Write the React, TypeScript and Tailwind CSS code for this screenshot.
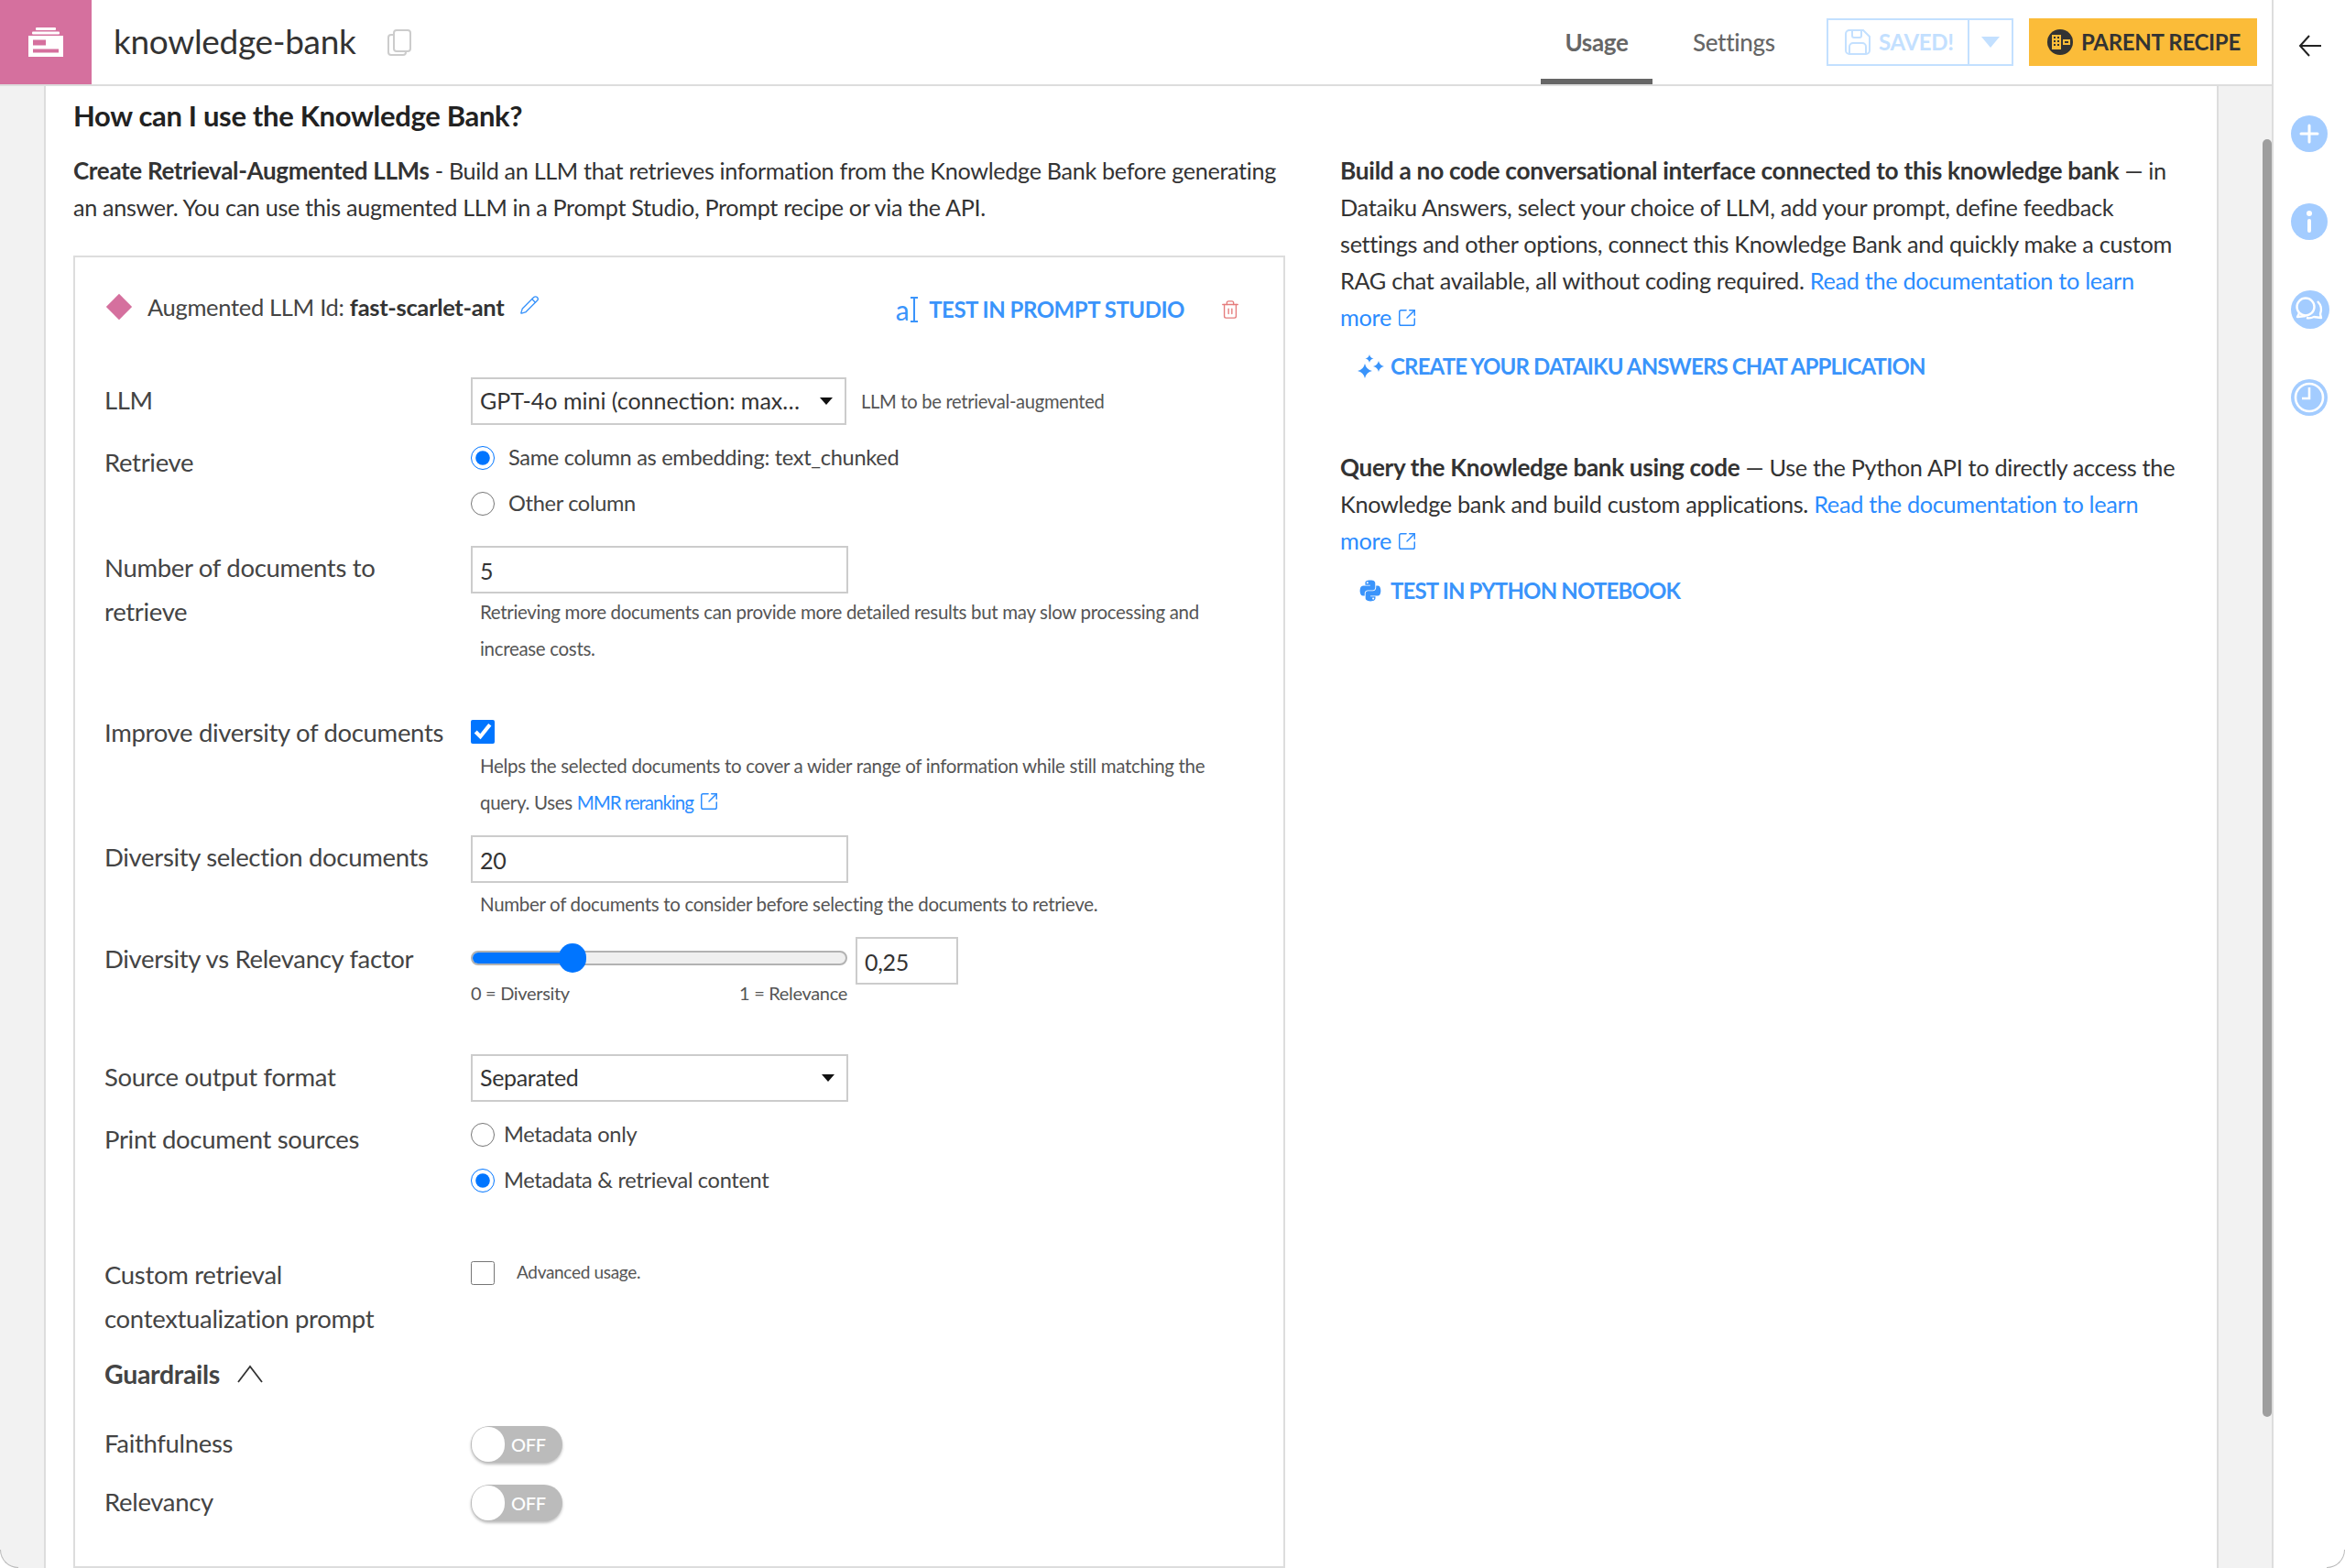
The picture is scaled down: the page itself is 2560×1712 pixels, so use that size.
import React from 'react';
import { Pencil, SquareArrowOutUpRight, Trash2 } from 'lucide-react';
import { FaPython } from 'react-icons/fa';

const ExtLink = ({ size = 20 }: { size?: number }) => (
  <SquareArrowOutUpRight size={size} strokeWidth={1.6} className="inline-block align-[-2px] ml-[6px]" />
);

// four point star used by the sparkle icon
const star = (cx: number, cy: number, r: number) =>
  `M${cx} ${cy - r}Q${cx + r * 0.18} ${cy - r * 0.18} ${cx + r} ${cy}Q${cx + r * 0.18} ${cy + r * 0.18} ${cx} ${cy + r}Q${cx - r * 0.18} ${cy + r * 0.18} ${cx - r} ${cy}Q${cx - r * 0.18} ${cy - r * 0.18} ${cx} ${cy - r}Z`;

// form row: fixed label column, the control sits right of it
const Row = ({ label, className, labelClass, children }: { label: React.ReactNode; className?: string; labelClass?: string; children?: React.ReactNode }) => (
  <div className={`flex ${className ?? ''}`}>
    <div className={`w-[400px] shrink-0 text-[27.5px] leading-[48px] text-[#444] ${labelClass ?? ''}`}>{label}</div>
    <div className="flex-1 min-w-0">{children}</div>
  </div>
);

const Help = ({ children }: { children: React.ReactNode }) => (
  <div className="pl-[10px] text-[20.5px] leading-[40px] text-[#555] whitespace-nowrap">{children}</div>
);

const TextBox = ({ value, className }: { value: string; className?: string }) => (
  <div className={`h-[52px] border-2 border-[#ccc] bg-white pl-[8px] text-[25px] leading-[50px] text-[#333] ${className ?? 'w-[412px]'}`}>{value}</div>
);

const Select = ({ value, className }: { value: string; className?: string }) => (
  <div className={`h-[52px] border-2 border-[#ccc] bg-white pl-[8px] pr-[13px] flex items-center justify-between text-[25px] text-[#333] ${className ?? 'w-[412px]'}`}>
    <span className="whitespace-nowrap">{value}</span>
    <span className="w-0 h-0 border-x-[7px] border-x-transparent border-t-[8px] border-t-[#111]" />
  </div>
);

const Radio = ({ label, checked, gap }: { label: string; checked?: boolean; gap: string }) => (
  <label className={`flex items-center h-[50px] ${gap} text-[23.6px] text-[#444] whitespace-nowrap`}>
    <input type="radio" readOnly checked={!!checked} className="w-[26px] h-[26px] m-0 accent-[#0075ff]" />
    {label}
  </label>
);

const Toggle = () => (
  <div className="relative w-[100px] h-[40px] rounded-full bg-[#bbb] shadow-[0_2px_3px_rgba(0,0,0,0.25)]">
    <div className="absolute left-[1px] top-[1px] w-[36px] h-[38px] rounded-full bg-white" />
    <span className="absolute left-[44px] top-0 leading-[40px] text-[20px] font-medium text-white">OFF</span>
  </div>
);

const ActionLink = ({ icon, children, className }: { icon: React.ReactNode; children: React.ReactNode; className?: string }) => (
  <div className={`flex items-center h-[40px] pl-[18px] text-[24px] font-bold tracking-[-0.035em] text-[#3a94fb] whitespace-nowrap ${className ?? ''}`}>
    <span className="w-[30px] flex justify-center shrink-0">{icon}</span>
    <span className="ml-[7px]">{children}</span>
  </div>
);

const RailIcon = ({ children, big }: { children: React.ReactNode; big?: boolean }) => (
  <div className={`rounded-full bg-[#a3ccff] flex items-center justify-center ${big ? 'w-[42px] h-[42px] my-[-1px]' : 'w-[40px] h-[40px]'}`}>{children}</div>
);

const App: React.FC = () => {
  return (
    <div
      className="relative w-[2560px] h-[1712px] overflow-hidden bg-white flex flex-col tracking-[-0.02em]"
      style={{ fontFamily: '"Lato", "Open Sans", sans-serif' }}
    >
      {/* top bar */}
      <header className="h-[94px] shrink-0 flex border-r-2 border-r-[#ddd] w-[2482px]">
        <div className="flex-1 flex border-b-2 border-[#ddd] min-w-0">
          <div className="w-[100px] h-[92px] bg-[#d5709e] flex items-center justify-center shrink-0">
            <svg width="38" height="32" viewBox="0 0 38 32" fill="#fff">
              <rect x="8" y="0" width="22" height="3" rx="1" />
              <rect x="4" y="4.500" width="30" height="3" rx="1" />
              <path d="M0 9h38v23H0z M5 13.500v6h14v-6z M5 23.500v4h28v-4z" fillRule="evenodd" />
            </svg>
          </div>
          <div className="ml-[24px] text-[37px] leading-[90px] text-[#333] font-normal">knowledge-bank</div>
          <svg className="ml-[34px] mt-[32px]" width="26" height="30" viewBox="0 0 26 30" fill="none" stroke="#ccc" strokeWidth="2">
            <rect x="7" y="1" width="18" height="23" rx="3" />
            <path d="M7 6H4a3 3 0 0 0-3 3v16a3 3 0 0 0 3 3h13a3 3 0 0 0 3-3v-1" />
          </svg>
          <div className="flex-1" />
          <nav className="flex text-[26px] font-medium">
            <div className="w-[122px] h-[92px] border-b-[6px] border-[#666] mb-[-2px] text-center leading-[92px] text-[#666] font-bold">Usage</div>
            <div className="ml-[44px] w-[94px] leading-[92px] text-[#666]">Settings</div>
          </nav>
          <div className="ml-[52px] mt-[20px] h-[52px] w-[204px] flex border-2 border-[#c3e0ff] text-[#c3e0ff]">
            <div className="flex-1 flex items-center pl-[18px] gap-[9px] text-[24px] font-bold">
              <svg width="28" height="28" viewBox="0 0 28 28" fill="none" stroke="currentColor" strokeWidth="2">
                <path d="M5 1h15l7 7v15a4 4 0 0 1-4 4H5a4 4 0 0 1-4-4V5a4 4 0 0 1 4-4z" />
                <path d="M8 1v6a2 2 0 0 0 2 2h6a2 2 0 0 0 2-2V1" />
                <path d="M5 27v-8a4 4 0 0 1 4-4h10a4 4 0 0 1 4 4v8" />
              </svg>
              SAVED!
            </div>
            <div className="w-[48px] border-l-2 border-[#c3e0ff] flex items-center justify-center">
              <span className="w-0 h-0 border-x-[10px] border-x-transparent border-t-[12px] border-t-[#c3e0ff]" />
            </div>
          </div>
          <div className="ml-[17px] mr-[16px] mt-[20px] h-[52px] w-[249px] bg-[#fbbc39] flex items-center pl-[20px] gap-[9px] text-[24px] font-bold text-[#333]">
            <svg width="28" height="28" viewBox="0 0 28 28">
              <circle cx="14" cy="14" r="14" fill="#333" />
              <path d="M5 6h10v16H5z" fill="#fbbc39" />
              <path d="M7 8h2v2H7zM11 8h2v2h-2zM7 12h2v2H7zM11 12h2v2h-2zM7 16h2v2H7zM11 16h2v2h-2z" fill="#333" />
              <path d="M17 11h8v6h-8z" fill="#fbbc39" />
              <path d="M19 13h4v2h-4z" fill="#333" />
            </svg>
            PARENT RECIPE
          </div>
        </div>
      </header>

      <div className="flex flex-1 min-h-0 relative mt-[-94px]">
        <div className="w-[2482px] shrink-0 mt-[94px] flex min-h-0">
          {/* left gutter */}
          <div className="w-[50px] shrink-0 bg-[#f2f2f2] border-r-2 border-[#ddd] rounded-bl-[20px]" />
          <main className="w-[2370px] shrink-0 bg-white overflow-hidden pl-[30px]">
            <h2 className="mt-[12px] text-[31px] leading-[40px] font-bold text-[#222]">How can I use the Knowledge Bank?</h2>
            <div className="flex mt-[20px]">
              <div className="w-[1323px] shrink-0">
                <p className="text-[25.2px] leading-[40px] text-[#333] whitespace-nowrap">
                  <b className="text-[26px]">Create Retrieval-Augmented LLMs</b> - Build an LLM that retrieves information from the Knowledge Bank before generating
                  <br />
                  an answer. You can use this augmented LLM in a Prompt Studio, Prompt recipe or via the API.
                </p>

                <section className="mt-[33px] border-2 border-[#ddd] pl-[32px] pr-[30px] pt-[36px] pb-[45px] text-[#333]">
                  <div className="flex items-center h-[36px] whitespace-nowrap">
                    <span className="w-[20px] h-[20px] ml-[6px] rotate-45 bg-[#d5709e]" />
                    <span className="ml-[21px] text-[25.5px] text-[#444]">
                      Augmented LLM Id: <b className="text-[#333]">fast-scarlet-ant</b>
                    </span>
                    <Pencil size={22} strokeWidth={1.5} className="ml-[17px] mt-[-4px] text-[#3a94fb]" />
                    <div className="flex-1" />
                    <div className="flex items-center mt-[6px] text-[24px] font-bold tracking-[-0.02em] text-[#3a94fb]">
                      <span className="font-normal text-[30px] leading-none">a</span>
                      <svg width="10" height="28" viewBox="0 0 10 28" fill="none" stroke="currentColor" strokeWidth="2" className="ml-[1px]">
                        <path d="M1 1h8M5 1v26M1 27h8" />
                      </svg>
                      <span className="ml-[11px]">TEST IN PROMPT STUDIO</span>
                    </div>
                    <Trash2 size={22} strokeWidth={1.5} className="ml-[39px] mr-[17px] mt-[6px] text-[#e57c7c]" />
                  </div>

                  <Row label="LLM" className="mt-[59px] h-[52px]" labelClass="mt-[1px]">
                    <div className="flex items-center">
                      <Select value="GPT-4o mini (connection: max…" className="w-[410px] tracking-normal" />
                      <span className="ml-[16px] text-[20.2px] text-[#555] whitespace-nowrap">LLM to be retrieval-augmented</span>
                    </div>
                  </Row>

                  <Row label="Retrieve" className="mt-[11px]" labelClass="pt-[6px]">
                    <Radio label="Same column as embedding: text_chunked" checked gap="gap-[15px]" />
                    <Radio label="Other column" gap="gap-[15px]" />
                  </Row>

                  <Row label={<>Number of documents to<br />retrieve</>} className="mt-[21px]">
                    <TextBox value="5" />
                    <Help>
                      Retrieving more documents can provide more detailed results but may slow processing and
                      <br />
                      increase costs.
                    </Help>
                  </Row>

                  <Row label="Improve diversity of documents" className="mt-[48px]" labelClass="whitespace-nowrap">
                    <input type="checkbox" readOnly checked className="block w-[26px] h-[26px] mt-[10px] m-0 accent-[#0075ff]" />
                    <div className="mt-[4px]">
                      <Help>
                        Helps the selected documents to cover a wider range of information while still matching the
                        <br />
                        query. Uses <span className="text-[#2b8cff] tracking-[-0.05em]">MMR reranking<ExtLink size={22} /></span>
                      </Help>
                    </div>
                  </Row>

                  <Row label="Diversity selection documents" className="mt-[16px]" labelClass="whitespace-nowrap">
                    <TextBox value="20" />
                    <div className="mt-[3px]">
                      <Help>Number of documents to consider before selecting the documents to retrieve.</Help>
                    </div>
                  </Row>

                  <Row label="Diversity vs Relevancy factor" className="mt-[16px]" labelClass="whitespace-nowrap">
                    <div className="flex items-start gap-[9px]">
                      <div className="w-[411px]">
                        <div className="relative h-[46px] flex items-center">
                          <div className="w-full h-[16px] rounded-full bg-[#efefef] border-2 border-[#b2b2b2] overflow-hidden">
                            <div className="w-[110px] h-full bg-[#0075ff]" />
                          </div>
                          <div className="absolute left-[96px] top-[7px] w-[30px] h-[32px] rounded-full bg-[#0075ff]" />
                        </div>
                        <div className="mt-[1px] flex justify-between text-[20px] leading-[28px] text-[#555]">
                          <span>0 = Diversity</span>
                          <span>1 = Relevance</span>
                        </div>
                      </div>
                      <TextBox value="0,25" className="w-[112px]" />
                    </div>
                  </Row>

                  <Row label="Source output format" className="mt-[53px] h-[52px]" labelClass="pt-[1px]">
                    <Select value="Separated" />
                  </Row>

                  <Row label="Print document sources" className="mt-[11px]" labelClass="pt-[6px]">
                    <Radio label="Metadata only" gap="gap-[10px]" />
                    <Radio label="Metadata & retrieval content" checked gap="gap-[10px]" />
                  </Row>

                  <Row label={<>Custom retrieval<br />contextualization prompt</>} className="mt-[54px]" labelClass="whitespace-nowrap">
                    <div className="flex items-center mt-[8px] gap-[24px]">
                      <input type="checkbox" readOnly className="block w-[26px] h-[26px] m-0 accent-[#0075ff]" />
                      <span className="text-[19px] text-[#555] mt-[-1px]">Advanced usage.</span>
                    </div>
                  </Row>

                  <div className="mt-[12px] h-[48px] flex items-center gap-[18px] text-[28.5px] font-bold text-[#444]">
                    Guardrails
                    <svg width="30" height="22" viewBox="0 0 30 22" fill="none" stroke="#333" strokeWidth="1.8">
                      <path d="M2 20 15 3l13 17" />
                    </svg>
                  </div>

                  <Row label="Faithfulness" className="mt-[29px] h-[48px] items-center" labelClass="mb-[2px]">
                    <Toggle />
                  </Row>
                  <Row label="Relevancy" className="mt-[16px] h-[48px] items-center" labelClass="mb-[2px]">
                    <Toggle />
                  </Row>
                </section>
              </div>

              {/* right column */}
              <div className="ml-[60px] w-[930px] shrink-0 text-[25.3px] leading-[40px] text-[#333] whitespace-nowrap">
                <p>
                  <b className="text-[26.3px]">Build a no code conversational interface connected to this knowledge bank</b> — in
                  <br />
                  Dataiku Answers, select your choice of LLM, add your prompt, define feedback
                  <br />
                  settings and other options, connect this Knowledge Bank and quickly make a custom
                  <br />
                  RAG chat available, all without coding required. <span className="text-[#2b8cff]">Read the documentation to learn<br />more<ExtLink size={22} /></span>
                </p>
                <ActionLink
                  className="mt-[14px]"
                  icon={
                    <svg width="29" height="26" viewBox="0 0 29 26" fill="currentColor">
                      <path d={star(8, 18, 8)} />
                      <path d={star(13, 4.500, 4.500)} />
                      <path d={star(23, 13, 6)} />
                    </svg>
                  }
                >
                  CREATE YOUR DATAIKU ANSWERS CHAT APPLICATION
                </ActionLink>
                <p className="mt-[70px]">
                  <b className="text-[26.1px]">Query the Knowledge bank using code</b> — Use the Python API to directly access the
                  <br />
                  Knowledge bank and build custom applications. <span className="text-[#2b8cff]">Read the documentation to learn<br />more<ExtLink size={22} /></span>
                </p>
                <ActionLink className="mt-[15px]" icon={<FaPython size={26} />}>
                  TEST IN PYTHON NOTEBOOK
                </ActionLink>
              </div>
            </div>
          </main>
          {/* right gutter with page scrollbar */}
          <div className="w-[62px] shrink-0 bg-[#f2f2f2] border-x-2 border-[#ddd] relative">
            <div className="absolute right-[0px] top-[58px] w-[10px] h-[1395px] rounded-full bg-[#9e9e9e]" />
          </div>
        </div>

        {/* right rail */}
        <aside className="w-[78px] shrink-0 flex flex-col items-center bg-white pl-[2px]">
          <svg className="mt-[36px]" width="28" height="28" viewBox="0 0 28 28" fill="none" stroke="#222" strokeWidth="2">
            <path d="M26 14H3M13 3 3 14l10 11" />
          </svg>
          <div className="mt-[62px] flex flex-col gap-[56px]">
            <RailIcon>
              <svg width="22" height="22" viewBox="0 0 22 22" fill="none" stroke="#fff" strokeWidth="3" strokeLinecap="round"><path d="M11 2v18M2 11h18" /></svg>
            </RailIcon>
            <RailIcon>
              <svg width="10" height="24" viewBox="0 0 10 24" fill="#fff"><circle cx="5" cy="3" r="3" /><rect x="3" y="9" width="4" height="15" rx="2" /></svg>
            </RailIcon>
            <RailIcon big>
              <svg width="42" height="42" viewBox="0 0 42 42" fill="none" stroke="#fff" strokeWidth="2.400" strokeLinejoin="round">
                <circle cx="16" cy="18" r="9.500" />
                <path d="M9 25l-2 4 9-1" />
                <path d="M29 12q6 6 3 14l1 4-8-1q-4 2-8 1" />
              </svg>
            </RailIcon>
            <RailIcon>
              <svg width="40" height="40" viewBox="0 0 40 40" fill="none" stroke="#fff" strokeWidth="2.600">
                <circle cx="20" cy="20" r="15" />
                <path d="M20 9v12h-8" />
              </svg>
            </RailIcon>
          </div>
        </aside>
      </div>

      {/* window corners */}
      <div className="absolute left-0 bottom-0 w-[20px] h-[20px] rounded-bl-[20px] border-l border-b border-[#bbb]" />
      <div className="absolute right-0 bottom-0 w-[20px] h-[20px] rounded-br-[20px] border-r border-b border-[#bbb]" />
    </div>
  );
};

export default App;
